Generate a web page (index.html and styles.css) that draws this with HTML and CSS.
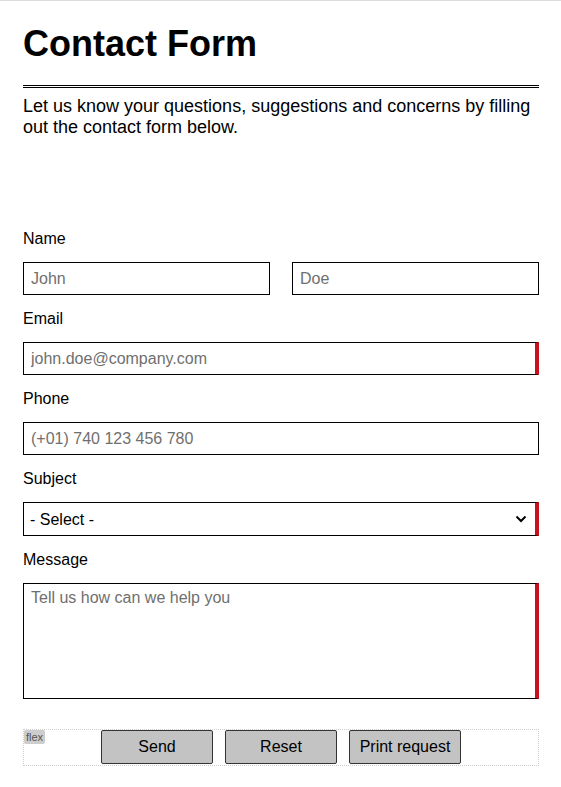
FILE: index.html
```html
<!DOCTYPE html>
<html lang="en">
<head>
<meta charset="utf-8">
<title>Contact Form</title>
<link rel="stylesheet" href="styles.css">
</head>
<body>
<div class="page">
  <h1 class="title">Contact Form</h1>
  <hr class="rule">
  <p class="intro">Let us know your questions, suggestions and concerns by filling out the contact form below.</p>
  <form class="form">
    <div class="field">
      <label class="label">Name</label>
      <div class="name-row">
        <input class="input" type="text" placeholder="John">
        <input class="input" type="text" placeholder="Doe">
      </div>
    </div>
    <div class="field">
      <label class="label">Email</label>
      <input class="input required" type="email" placeholder="john.doe@company.com">
    </div>
    <div class="field">
      <label class="label">Phone</label>
      <input class="input" type="tel" placeholder="(+01) 740 123 456 780">
    </div>
    <div class="field">
      <label class="label">Subject</label>
      <div class="select-wrap">
        <select class="select required">
          <option>- Select -</option>
        </select>
        <svg class="chevron" width="12" height="8" viewBox="0 0 12 8" aria-hidden="true"><path d="M1.5 1.5 L6 6 L10.5 1.5" fill="none" stroke="#000" stroke-width="2"/></svg>
      </div>
    </div>
    <div class="field">
      <label class="label">Message</label>
      <textarea class="textarea required" placeholder="Tell us how can we help you"></textarea>
    </div>
    <div class="actions">
      <span class="badge">flex</span>
      <button type="button" class="btn">Send</button>
      <button type="button" class="btn">Reset</button>
      <button type="button" class="btn">Print request</button>
    </div>
  </form>
</div>
</body>
</html>
```
FILE: styles.css
```css
html, body {
  margin: 0;
  padding: 0;
  background: #fff;
}
body {
  border-top: 1px solid #dcdcdc;
  font-family: "Liberation Sans", Arial, sans-serif;
  color: #000;
}
.page {
  padding: 0 22px 0 23px;
}
.title {
  margin: 22px 0 0;
  font-size: 36px;
  line-height: 41px;
  font-weight: bold;
}
.rule {
  margin: 21px 0 0;
  border: 0;
  border-top: 3px double #000;
  height: 0;
}
.intro {
  margin: 8px 0 0;
  font-size: 18px;
  line-height: 21px;
}
.form {
  margin-top: 92px;
}
.field {
  margin-bottom: 15px;
}
.label {
  display: block;
  font-size: 16px;
  line-height: 18px;
  margin-bottom: 14px;
}
.name-row {
  display: flex;
  gap: 22px;
}
.input, .select, .textarea {
  box-sizing: border-box;
  display: block;
  width: 100%;
  margin: 0;
  border: 1px solid #000;
  border-radius: 0;
  background: #fff;
  font-family: "Liberation Sans", Arial, sans-serif;
  font-size: 16px;
  color: #000;
  outline: none;
}
.input {
  height: 33px;
  padding: 0 7px;
}
.input::placeholder, .textarea::placeholder {
  color: #6f6f6f;
  opacity: 1;
}
.name-row .input {
  flex: 1 1 0;
  min-width: 0;
}
.required {
  border-right: 4px solid #c8101e;
}
.select-wrap {
  position: relative;
}
.select {
  height: 34px;
  padding: 0 6px;
  appearance: none;
  -webkit-appearance: none;
}
.chevron {
  position: absolute;
  right: 12px;
  top: 13px;
  pointer-events: none;
}
.textarea {
  height: 116px;
  padding: 5px 7px;
  resize: none;
  line-height: 18px;
}
.actions {
  position: relative;
  box-sizing: border-box;
  height: 37px;
  margin-top: 30px;
  border: 1px dotted #cfcfcf;
  display: flex;
  justify-content: center;
  align-items: flex-start;
  gap: 12px;
}
.btn {
  box-sizing: border-box;
  width: 112px;
  height: 34px;
  margin: 0;
  padding: 0;
  background: #c3c3c3;
  border: 1px solid #333;
  border-radius: 2px;
  font-family: "Liberation Sans", Arial, sans-serif;
  font-size: 16px;
  color: #000;
}
.badge {
  position: absolute;
  top: 0;
  left: 0;
  padding: 0 2px;
  height: 14px;
  line-height: 14px;
  font-size: 11px;
  color: #555;
  background: #cdcdcd;
  border-radius: 2px;
}
```
